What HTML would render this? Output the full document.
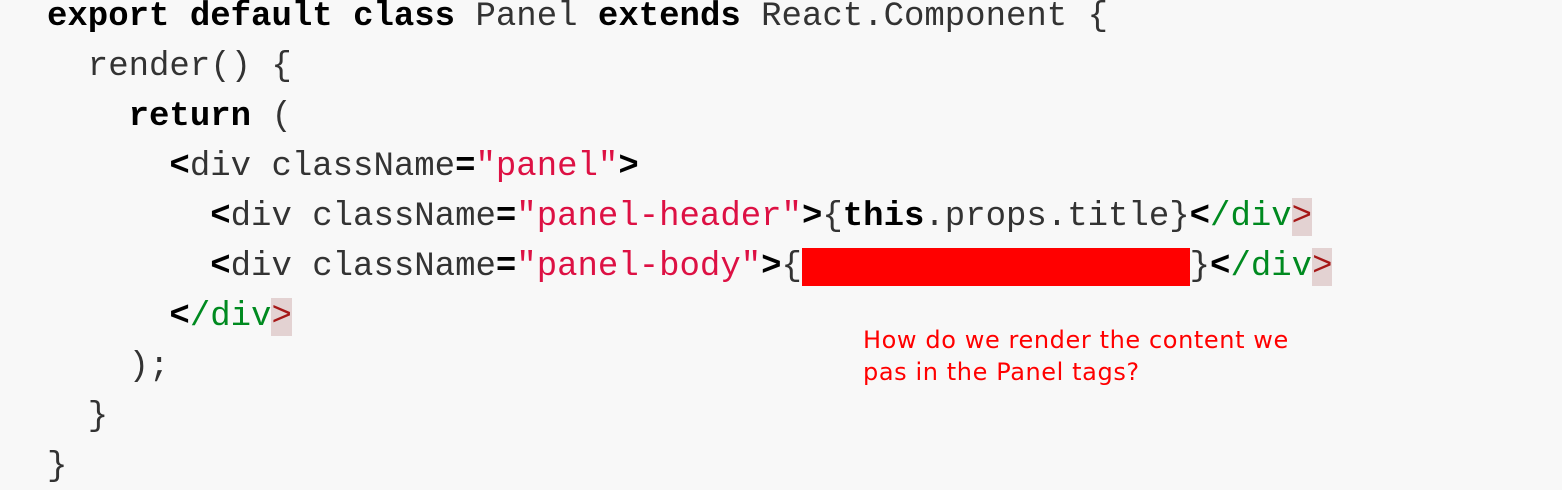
<!DOCTYPE html>
<html><head><style>
html,body{margin:0;padding:0;background:#f8f8f8;width:1562px;height:490px;overflow:hidden;position:relative}
pre{position:absolute;left:47px;top:-8px;margin:0;font-family:"Liberation Mono","Courier New",Courier,monospace;font-size:34px;line-height:50px;color:#333}
b{color:#000}
.s{color:#dd1144}
.t{color:#008a20}
.e{color:#a61717;background:#e3d2d2}
.r{background:#f00;color:#f00}
.note{position:absolute;left:863px;top:324px;font-family:"DejaVu Sans",sans-serif;font-size:24px;letter-spacing:0.6px;line-height:32px;color:#f00;width:450px}
</style></head><body>
<pre><b>export</b> <b>default</b> <b>class</b> Panel <b>extends</b> React.Component {
  render() {
    <b>return</b> (
      <b>&lt;</b>div className<b>=</b><span class="s">"panel"</span><b>&gt;</b>
        <b>&lt;</b>div className<b>=</b><span class="s">"panel-header"</span><b>&gt;</b>{<b>this</b>.props.title}<b>&lt;</b><span class="t">/div</span><span class="e">&gt;</span>
        <b>&lt;</b>div className<b>=</b><span class="s">"panel-body"</span><b>&gt;</b>{<span class="r">xxxxxxxxxxxxxxxxxxx</span>}<b>&lt;</b><span class="t">/div</span><span class="e">&gt;</span>
      <b>&lt;</b><span class="t">/div</span><span class="e">&gt;</span>
    );
  }
}</pre>
<div class="note">How do we render the content we pas in the Panel tags?</div>
</body></html>
